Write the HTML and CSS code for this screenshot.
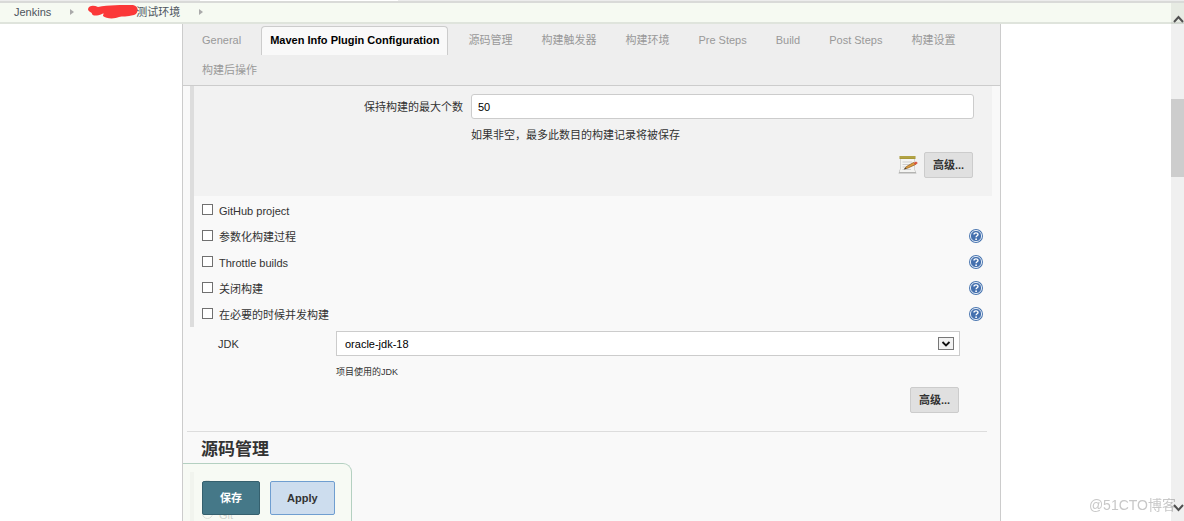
FILE: index.html
```html
<!DOCTYPE html>
<html lang="zh-CN">
<head>
<meta charset="utf-8">
<title>Jenkins</title>
<link rel="stylesheet" href="styles.css">
</head>
<body>
<svg class="defs" aria-hidden="true">
  <symbol id="help" viewBox="0 0 14 14">
    <circle cx="7" cy="7" r="7" fill="#4a76b0"/>
    <circle cx="7" cy="7" r="5.6" fill="#4470ae" stroke="#dfe8f4" stroke-width="1"/>
    <path d="M5 5.6C5 3.4 9 3.4 9 5.4 9 6.8 7.1 6.7 7.1 8.3" fill="none" stroke="#fff" stroke-width="1.4"/>
    <circle cx="7.1" cy="10.2" r=".9" fill="#fff"/>
  </symbol>
</svg>
<header class="top">
  <div class="top-strip"><span class="top-search"></span></div>
  <nav class="crumbs" aria-label="breadcrumb">
    <a href="#">Jenkins</a>
    <svg class="arrow" viewBox="0 0 4 6"><path d="M0 0L4 3L0 6z"/></svg>
    <a href="#" class="job"><svg class="mark" viewBox="0 0 50 14"><path d="M0 4C1 0 6 0 10 2C20 0 34 0 45 0C51 1 51 8 46 10C39 12 34 11 31 12C27 14 18 14 15 11C15 9 17 8 14 9C9 11 5 11 4 9C4 7 0 7 0 4z"/></svg>测试环境</a>
    <svg class="arrow" viewBox="0 0 4 6"><path d="M0 0L4 3L0 6z"/></svg>
  </nav>
</header>
<main class="panel">
  <nav class="tabs">
    <a href="#">General</a>
    <a href="#" class="active">Maven Info Plugin Configuration</a>
    <a href="#">源码管理</a>
    <a href="#">构建触发器</a>
    <a href="#">构建环境</a>
    <a href="#">Pre Steps</a>
    <a href="#">Build</a>
    <a href="#">Post Steps</a>
    <a href="#">构建设置</a>
    <a href="#">构建后操作</a>
  </nav>
  <form class="config">
    <div class="group">
      <section class="nested">
        <div class="field">
          <label for="keep">保持构建的最大个数</label>
          <input id="keep" type="text" value="50">
          <p>如果非空，最多此数目的构建记录将被保存</p>
        </div>
        <div class="actions">
          <svg class="note" viewBox="0 0 20 20">
            <path d="M2 2H17V15L18.500 18.500H.5L2 14z" fill="#b4b4b2"/>
            <path d="M2.500 4H16.500V15L17.500 17H1.500L2.500 14z" fill="#f4f4f2"/>
            <path d="M1.500 1H17.500V4H1.500z" fill="#a8993a"/>
            <path d="M2.500 2H17" stroke="#cfc268" stroke-dasharray="1 1"/>
            <path d="M4.500 7H14M4.500 9.500H12M4.500 12H8M4.500 14.500H13" stroke="#cfcfcf"/>
            <path d="M6.500 14L8.500 11.500L15.500 7.500L17.500 9.500L10 13z" fill="#e0a040" stroke="#87551d" stroke-width=".7"/>
            <path d="M15.500 8L18 6.500L19.800 8L17.500 10z" fill="#d9573f"/>
            <path d="M6 14.500L7.500 12.500L8.500 13.500z" fill="#443"/>
          </svg>
          <button type="button" class="btn">高级...</button>
        </div>
      </section>
      <div class="options">
        <div class="option"><input type="checkbox" id="c1"><label for="c1">GitHub project</label></div>
        <div class="option"><input type="checkbox" id="c2"><label for="c2">参数化构建过程</label><a href="#" class="help" aria-label="帮助"><svg><use href="#help"/></svg></a></div>
        <div class="option"><input type="checkbox" id="c3"><label for="c3">Throttle builds</label><a href="#" class="help" aria-label="帮助"><svg><use href="#help"/></svg></a></div>
        <div class="option"><input type="checkbox" id="c4"><label for="c4">关闭构建</label><a href="#" class="help" aria-label="帮助"><svg><use href="#help"/></svg></a></div>
        <div class="option"><input type="checkbox" id="c5"><label for="c5">在必要的时候并发构建</label><a href="#" class="help" aria-label="帮助"><svg><use href="#help"/></svg></a></div>
      </div>
    </div>
    <div class="jdk">
      <label for="jdk">JDK</label>
      <div class="select-box">
        <select id="jdk"><option>oracle-jdk-18</option></select>
        <svg class="drop" viewBox="0 0 16 13"><rect x=".5" y=".5" width="15" height="12" fill="#f2f2f2" stroke="#777"/><path d="M4.500 5L8 8.500L11.500 5" fill="none" stroke="#111" stroke-width="1.800"/></svg>
      </div>
      <p>项目使用的JDK</p>
    </div>
    <div class="more"><button type="button" class="btn">高级...</button></div>
    <h2>源码管理</h2>
    <div class="scm">
      <div class="option"><input type="radio" name="scm" id="none" aria-label="None"></div>
      <div class="option"><input type="radio" name="scm" id="git"><label for="git">Git</label></div>
    </div>
  </form>
  <div class="save-bar">
    <button type="button" class="save">保存</button>
    <button type="button" class="apply">Apply</button>
  </div>
</main>
<div class="watermark">@51CTO博客</div>
<div class="scrollbar" aria-hidden="true">
  <svg viewBox="0 0 11 8"><path d="M1 7L5.500 2L10 7"/></svg>
  <div class="thumb"></div>
  <svg class="down" viewBox="0 0 11 8"><path d="M1 1L5.500 6L10 1"/></svg>
</div>
</body>
</html>
```
FILE: styles.css
```css
* { box-sizing: border-box; }
body {
  margin: 0;
  height: 100vh;
  overflow: hidden;
  display: flex;
  flex-direction: column;
  background: #fff;
  color: #333;
  font: 11px/16px "Liberation Sans", "Noto Sans CJK SC", sans-serif;
}
a { color: inherit; text-decoration: none; }
p { margin: 0; }
button, input, select { font: inherit; color: inherit; }
.defs { position: absolute; width: 0; height: 0; }

.top { flex: none; }
.top-strip { height: 3px; background: #ececec; border-bottom: 2px solid #d9dad8; padding: 0 786px 0 200px; }
.top-search { display: block; height: 1px; background: #fff; }
.crumbs {
  height: 21px;
  padding: 0 14px 2px;
  display: flex;
  align-items: center;
  background: #f6faf2;
  border-bottom: 2px solid #dfe4dc;
  color: #4d545d;
}
.arrow { width: 4px; height: 6px; margin: 0 14px 0 19px; fill: #aaa; }
.job { display: flex; align-items: center; }
.mark { width: 50px; height: 14px; fill: #fb3838; margin-right: -2px; }

.panel {
  flex: 1;
  min-height: 0;
  margin: 0 183px 0 182px;
  background: #f9f9f9;
  border: solid #ccc;
  border-width: 0 1px;
}
.tabs {
  display: flex;
  flex-wrap: wrap;
  gap: 1px 11px;
  padding: 2px 10px 0;
  background: #eee;
  border-bottom: 1px solid #ccc;
  color: #999;
}
.tabs a { height: 29px; line-height: 27px; padding: 0 8px; border: 1px solid transparent; border-bottom: 0; }
.tabs .active { color: #000; font-weight: bold; background: #f9f9f9; border-color: #ccc; border-radius: 4px 4px 0 0; }

.group { margin: 0 8px 0 7px; border-left: 4px solid #ddd; }
.nested { background: #f2f2f2; padding: 8px 18px 18px 0; }
.field { display: grid; grid-template-columns: 269px 1fr; column-gap: 8px; align-items: center; text-align: right; row-gap: 8px; }
.field input { height: 25px; padding: 0 6px; border: 1px solid #ccc; border-radius: 3px; background: #fff; color: #000; min-width: 0; }
.field p { grid-column: 2; text-align: left; }
.actions { display: flex; justify-content: flex-end; align-items: center; gap: 6px; padding: 9px 1px 0 0; }
.note { width: 20px; height: 20px; }
.btn { height: 26px; width: 49px; padding: 0; border: 1px solid #ccc; border-radius: 2px; background: #e0e0e0; font-weight: bold; }

.options { padding: 1px 9px 0 8px; }
.option { display: flex; align-items: center; gap: 6px; height: 26px; }
.option label { padding-top: 2px; }
.option input { width: 11px; height: 11px; margin: 0 0 2px; flex: none; appearance: none; border: 1px solid #707070; background: #fff; }
.option input[type="radio"] { border-radius: 50%; }
.help { margin-left: auto; }
.help svg { display: block; width: 14px; height: 14px; }

.jdk { display: grid; grid-template-columns: 118px 1fr; row-gap: 8px; align-items: center; padding: 4px 40px 0 35px; }
.select-box { position: relative; }
.select-box select { appearance: none; display: block; width: 100%; height: 25px; padding: 0 8px; border: 1px solid #ccc; border-radius: 0; background: #fff; color: #000; }
.drop { position: absolute; right: 6px; top: 6px; width: 16px; height: 13px; pointer-events: none; }
.jdk p { grid-column: 2; font-size: 9px; }
.more { display: flex; justify-content: flex-end; margin: 0 13px 0 4px; padding: 7px 28px 18px 0; border-bottom: 1px solid #ddd; }
h2 { margin: 6px 18px 10px; font-size: 17px; line-height: 24px; }
.scm { margin-left: 7px; padding-left: 8px; border-left: 4px solid #ddd; }
.scm .option { height: 28px; }

.save-bar {
  position: fixed;
  left: 183px;
  bottom: 0;
  display: flex;
  gap: 10px;
  padding: 17px 16px 6px 19px;
  background: rgba(246, 250, 242, .8);
  border: 1px solid #b4d0c1;
  border-width: 1px 1px 0 0;
  border-radius: 0 9px 0 0;
}
.save-bar button { height: 34px; border-radius: 2px; font-weight: bold; }
.save { padding: 0 17px; background: #457888; border: 1px solid #35606e; color: #fff; }
.apply { padding: 0 16px; background: #cdddee; border: 1px solid #6f9ed0; }

.scrollbar {
  position: fixed;
  inset: 3px 0 0 auto;
  width: 13px;
  display: flex;
  flex-direction: column;
  background: rgba(0, 0, 0, .06);
  padding: 12px 0 9px;
}
.scrollbar svg { width: 11px; height: 8px; margin-left: 2px; fill: none; stroke: #505050; stroke-width: 2; flex: none; }
.thumb { height: 78px; margin-top: 76px; background: #cdcdcd; }
.scrollbar .down { margin-top: auto; }
.watermark { position: fixed; right: 8px; bottom: 6px; font-size: 14px; line-height: 20px; color: #c8c8c8; }
```
